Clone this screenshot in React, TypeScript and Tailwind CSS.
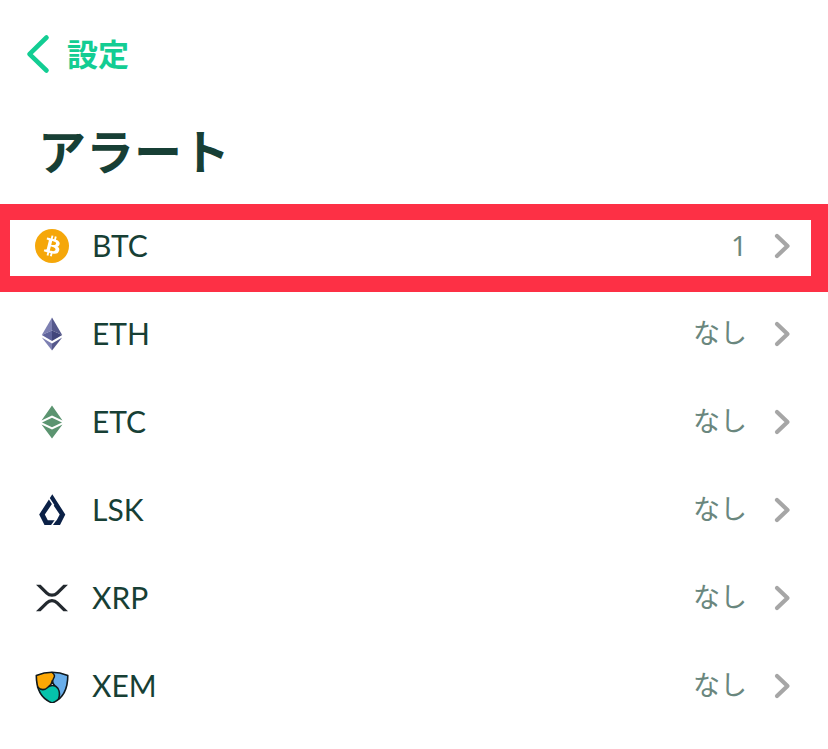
import React from "react";
import clsx from "clsx";

type Coin = {
   symbol: string;
   alerts: number;
   icon: React.ReactNode;
};

const BtcIcon = () => (
   <svg viewBox="0 0 32 32" className="w-8.5 h-8.5" aria-hidden="true">
      <circle cx="16" cy="16" r="16" fill="#f5a70a" />
      <path
         fill="#fff"
         d="M23.189 14.02c.314-2.096-1.283-3.223-3.465-3.975l.708-2.84-1.728-.43-.69 2.765c-.454-.114-.92-.22-1.385-.326l.695-2.783L15.596 6l-.708 2.839c-.376-.086-.746-.17-1.104-.26l.002-.009-2.384-.595-.46 1.846s1.283.294 1.256.312c.7.175.826.638.805 1.006l-.806 3.235c.048.012.11.03.18.057l-.183-.045-1.13 4.532c-.086.212-.303.531-.793.41.018.025-1.256-.313-1.256-.313l-.858 1.978 2.25.561c.418.105.828.215 1.231.318l-.715 2.872 1.727.43.708-2.84c.472.127.93.245 1.378.357l-.706 2.828 1.728.43.715-2.866c2.948.558 5.164.333 6.097-2.333.752-2.146-.037-3.385-1.588-4.192 1.13-.26 1.98-1.003 2.207-2.538zm-3.95 5.538c-.533 2.147-4.148.986-5.32.695l.95-3.805c1.172.293 4.929.872 4.37 3.11zm.535-5.569c-.487 1.953-3.495.96-4.47.717l.86-3.45c.975.243 4.118.696 3.61 2.733z"
      />
   </svg>
);

const EthIcon = () => (
   <svg viewBox="0 0 34 34" className="w-8.5 h-8.5" aria-hidden="true">
      <path fill="#7d80b2" d="M17 .5 6.8 18 17 13.5z" />
      <path fill="#55588c" d="M17 .5 27.2 18 17 13.5z" />
      <path fill="#5f639b" d="M6.8 18 17 13.5V24z" />
      <path fill="#42457b" d="M27.2 18 17 13.5V24z" />
      <path fill="#7d80b2" d="M6.8 20.5 17 26.5v7z" />
      <path fill="#55588c" d="M27.2 20.5 17 26.5v7z" />
   </svg>
);

const EtcIcon = () => (
   <svg viewBox="0 0 34 34" className="w-8.5 h-8.5" fill="#5b9470" aria-hidden="true">
      <path d="M17 .5 27.5 15.5 17 10.5 6.5 15.5z" />
      <path d="M17 12.7 27 17.5 17 22.3 7 17.5z" />
      <path d="M6.5 19.5 17 24.5 27.5 19.5 17 33.5z" />
   </svg>
);

const LskIcon = () => (
   <svg viewBox="0 0 34 34" className="w-8.5 h-8.5" aria-hidden="true">
      <path
         fill="#0b2147"
         fillRule="evenodd"
         d="M17.3 1.3 30.3 21.5 25 32H9.5L4.2 21.5zM17.3 10.500 9.800 21.500 12.800 27.300H21.700L24.700 21.500z"
      />
      <path
         stroke="#fff"
         strokeWidth="1.400"
         d="M13.800 5 18.800 12.500M21 26.500 16.300 33"
      />
   </svg>
);

const XrpIcon = () => (
   <svg viewBox="5.4 5.7 21.2 21.2" className="w-8.5 h-8.5" fill="#23292f" aria-hidden="true">
      <path d="M23.07 8h2.89l-6.015 5.957a5.621 5.621 0 01-7.89 0L6.035 8H8.93l4.57 4.523a3.556 3.556 0 004.996 0L23.07 8zM8.895 24.563H6l6.055-5.993a5.621 5.621 0 017.89 0L26 24.562h-2.895L18.5 20a3.556 3.556 0 00-4.996 0l-4.61 4.563z" />
   </svg>
);

const XemIcon = () => (
   <svg viewBox="0 0 34 34" className="w-8.5 h-8.5" aria-hidden="true">
      <path
         fill="#05c4ab"
         d="M2.500 18C5 21.500 9 21.500 12 19 15.500 16 19 16 22 18.500 25 21.500 25 25.500 23.500 30 22 31.500 20 33 17.200 34 9.500 31 4.500 25.500 2.500 18z"
      />
      <path
         fill="#69aeea"
         d="M17 3.500C22.500 3.500 28 4.500 32.800 6.500 32.800 17 30 25 23.500 30 25.500 25 25 21.500 22 18.500 17.500 16 16.800 12 18.800 9 20 7 19.500 5 17 3.500z"
      />
      <path
         fill="#fda805"
         d="M1.300 6.500C6 4.500 11.500 3.500 17 3.500 19.500 5 20 7 18.800 9 17 12 17.500 15 13.500 18 10 21.500 5 21.500 2.500 18 1.500 15 1.300 11 1.300 6.500z"
      />
      <g fill="none" stroke="#10191d" strokeLinejoin="round" strokeLinecap="round">
         <path
            strokeWidth="1.600"
            d="M1.300 6.500C11 2.500 23 2.500 32.800 6.500 32.800 20 28.500 29.500 17.200 34 5.500 29.500 1.300 20 1.300 6.500z"
         />
         <path
            strokeWidth="1.500"
            d="M17 3.500C20 5.500 20 7.500 18.500 9.500 16.800 12.500 17.500 15.500 22 18.500M2.500 18C6 21.500 10 21 13 18.200 16 16 17 14.500 17.300 11.500M14 17.500C18 15.500 21 16.500 23 19.500 25 23 25 26 23.500 30"
         />
      </g>
   </svg>
);

const coins: Coin[] = [
   { symbol: "BTC", alerts: 1, icon: <BtcIcon /> },
   { symbol: "ETH", alerts: 0, icon: <EthIcon /> },
   { symbol: "ETC", alerts: 0, icon: <EtcIcon /> },
   { symbol: "LSK", alerts: 0, icon: <LskIcon /> },
   { symbol: "XRP", alerts: 0, icon: <XrpIcon /> },
   { symbol: "XEM", alerts: 0, icon: <XemIcon /> },
];

function CoinRow({ coin, highlighted }: { coin: Coin; highlighted: boolean }) {
   return (
      <li>
         <button
            type="button"
            className={clsx(
               "flex items-center w-full h-22 pb-1 text-left cursor-pointer",
               highlighted
                  ? "border-y-16 border-l-10 border-r-17 border-[#fd3045] pl-[25px] pr-5"
                  : "pl-[35px] pr-[37px]"
            )}
         >
            {coin.icon}
            <span className="ml-[23px] pb-0.5 text-[30px] leading-9 text-[#173f35]">
               {coin.symbol}
            </span>
            {coin.alerts > 0 ? (
               <span className="ml-auto pb-0.5 font-['Noto_Sans',sans-serif] text-[28px] leading-9 text-[#6a877e]">
                  {coin.alerts}
               </span>
            ) : (
               <span className="ml-auto pb-1 font-['Noto_Sans_CJK_JP',sans-serif] text-[27px] leading-9 text-[#6a877e]">
                  なし
               </span>
            )}
            <svg
               viewBox="0 0 18 26"
               className="w-4.5 h-6.5 ml-[26px]"
               fill="none"
               stroke="#a6a6a6"
               strokeWidth="4.2"
               strokeLinecap="round"
               strokeLinejoin="round"
               aria-hidden="true"
            >
               <path d="M4 3 14.500 13 4 23" />
            </svg>
         </button>
      </li>
   );
}

function App() {
   return (
      <div className="min-h-screen bg-white font-['Lato','Noto_Sans_CJK_JP',sans-serif]">
         <header className="h-51 pt-8">
            <a
               href="#settings"
               className="flex items-center w-fit ml-6 gap-x-4 text-[31px] leading-11 font-bold text-[#13cd93]"
            >
               <svg
                  viewBox="0 0 27 44"
                  className="w-[27px] h-11"
                  fill="none"
                  stroke="currentColor"
                  strokeWidth="4.6"
                  strokeLinecap="round"
                  strokeLinejoin="round"
                  aria-hidden="true"
               >
                  <path d="M22.500 5.500 5.500 22.200 22.500 38.500" />
               </svg>
               設定
            </a>
            <h1 className="mt-11 ml-[38px] text-[48px] leading-16 font-bold text-[#173f35]">
               アラート
            </h1>
         </header>
         <ul>
            {coins.map((coin, indx) => (
               <CoinRow key={coin.symbol} coin={coin} highlighted={indx === 0} />
            ))}
         </ul>
      </div>
   );
}

export default App;
